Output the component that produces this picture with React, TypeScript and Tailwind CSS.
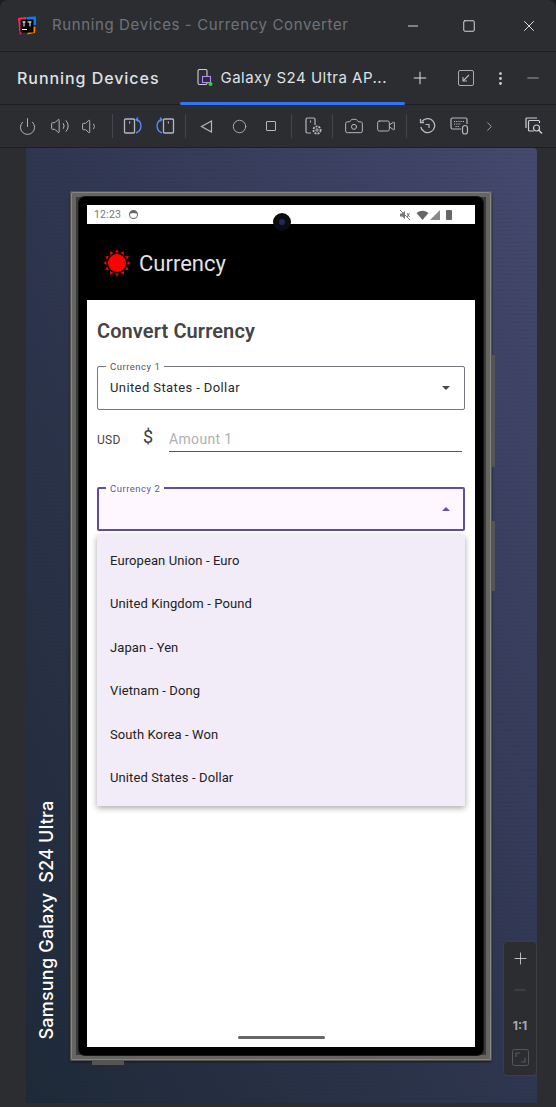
import { Camera, ChevronRight, Circle, Ellipsis, Minus, Plus, Power, Square, Video, Volume1, Volume2, X } from 'lucide-react';
import type { ReactNode } from 'react';

const currencies = [
  'European Union - Euro',
  'United Kingdom - Pound',
  'Japan - Yen',
  'Vietnam - Dong',
  'South Korea - Won',
  'United States - Dollar',
];

function Tool({ children, className = '' }: { children: ReactNode; className?: string }) {
  return <div className={`flex h-[32px] w-[32px] shrink-0 items-center justify-center ${className}`}>{children}</div>;
}

function Sep({ className = '' }: { className?: string }) {
  return <div className={`h-[24px] w-px shrink-0 bg-[#43454a] ${className}`} />;
}

function Logo() {
  return (
    <svg width="20" height="20" viewBox="0 0 20 20" className="shrink-0">
      <path d="M1 2 L9 1 L9 12 L3 19 L2 12 Z" fill="#fe2857" />
      <path d="M9 1 L19 0.5 L19 9 L12 9 Z" fill="#087cfa" />
      <path d="M15 10 L18.5 11 L18 17 L10 18.5 Z" fill="#ff8100" />
      <rect x="3.5" y="3.5" width="13" height="13" fill="#000" />
      <rect x="5" y="13" width="5" height="1" fill="#fff" />
      <rect x="5.5" y="5.5" width="3" height="1" fill="#fff" />
      <rect x="6.5" y="5.5" width="1" height="5" fill="#fff" />
      <rect x="10.5" y="5.5" width="4" height="1" fill="#fff" />
      <rect x="12.5" y="5.5" width="1" height="5" fill="#fff" />
    </svg>
  );
}

function SunIcon() {
  const rays = [0, 30, 60, 90, 120, 150, 180, 210, 240, 270, 300, 330];
  return (
    <svg width="28" height="28" viewBox="0 0 28 28" className="shrink-0">
      {rays.map((deg) => (
        <path key={deg} d="M14 0.5 L16 3.5 L12 3.5 Z" fill="#ff0000" transform={`rotate(${deg} 14 14)`} />
      ))}
      <circle cx="14" cy="14" r="9" fill="#ff0000" />
    </svg>
  );
}

function RotateIcon({ flip }: { flip?: boolean }) {
  return (
    <svg width="20" height="18" viewBox="0 0 20 18" fill="none" className={flip ? '-scale-x-100' : ''}>
      <rect x="1.5" y="2" width="10" height="14" rx="1" stroke="#b4b8bf" strokeWidth="1.3" />
      <rect x="6" y="4.5" width="1.2" height="2" fill="#b4b8bf" />
      <path d="M13.5 2.5 C19.5 4.5 19.5 13.5 13 16" stroke="#548af7" strokeWidth="1.4" />
      <path d="M15 0.5 L13 2.6 L15.5 4.5" stroke="#548af7" strokeWidth="1.2" />
    </svg>
  );
}

function DeviceTabIcon() {
  return (
    <svg width="16" height="18" viewBox="0 0 16 18" fill="none" className="shrink-0">
      <rect x="1" y="0.5" width="9" height="15" rx="1.5" stroke="#ced0d6" strokeWidth="1.1" />
      <rect x="5.5" y="7.5" width="8" height="6" fill="#2b2d30" stroke="#b189f5" strokeWidth="1.1" />
      <circle cx="13.5" cy="15" r="2" fill="#22dd22" />
    </svg>
  );
}

function PhoneGear() {
  return (
    <svg width="18" height="18" viewBox="0 0 18 18" fill="none">
      <path d="M6 16 H2.5 A1.5 1.5 0 0 1 1 14.5 V2.5 A1.5 1.5 0 0 1 2.5 1 H8.5 A1.5 1.5 0 0 1 10 2.5 V8" stroke="#b4b8bf" strokeWidth="1.2" />
      <rect x="5" y="3.5" width="1" height="2" fill="#b4b8bf" />
      <circle cx="12" cy="13" r="3.6" stroke="#b4b8bf" strokeWidth="1.8" strokeDasharray="2 1" />
      <circle cx="12" cy="13" r="1.2" stroke="#b4b8bf" />
    </svg>
  );
}

function ResetIcon() {
  return (
    <svg width="17" height="17" viewBox="0 0 17 17" fill="none">
      <path d="M3 3.5 A7 7 0 1 1 1.8 9" stroke="#b4b8bf" strokeWidth="1.3" />
      <path d="M1.5 1 V4.5 H5" stroke="#b4b8bf" strokeWidth="1.3" />
      <path d="M6.5 6.5 H10 V10" stroke="#b4b8bf" strokeWidth="1.2" />
    </svg>
  );
}

function KeyboardIcon() {
  return (
    <svg width="20" height="18" viewBox="0 0 20 18" fill="none">
      <path d="M11 12 H2.5 A1.5 1.5 0 0 1 1 10.5 V2.5 A1.5 1.5 0 0 1 2.5 1 H15.5 A1.5 1.5 0 0 1 17 2.5 V7" stroke="#b4b8bf" strokeWidth="1.2" />
      <path d="M4 4.5 H14 M4 7 H11 M5.5 9.5 H10" stroke="#b4b8bf" strokeWidth="1.2" strokeDasharray="1.2 1" />
      <rect x="12.5" y="8.5" width="5" height="8.5" rx="2.5" stroke="#b4b8bf" strokeWidth="1.2" />
    </svg>
  );
}

function ScreenSearchIcon() {
  return (
    <svg width="18" height="18" viewBox="0 0 18 18" fill="none">
      <path d="M1 11 V2 A1 1 0 0 1 2 1 H12" stroke="#ced0d6" strokeWidth="1.2" />
      <path d="M9 14 H4.5 A1 1 0 0 1 3.5 13 V4.5 A1 1 0 0 1 4.5 3.5 H13.5 A1 1 0 0 1 14.5 4.5 V6" stroke="#ced0d6" strokeWidth="1.2" />
      <circle cx="11.5" cy="11" r="3" stroke="#ced0d6" strokeWidth="1.2" />
      <path d="M13.8 13.3 L17 16.5" stroke="#ced0d6" strokeWidth="1.4" />
    </svg>
  );
}

function StatusIcons() {
  return (
    <div className="flex items-center">
      <svg width="12" height="12" viewBox="0 0 12 12" fill="none">
        <path d="M1 4.5 H3 L6 2 V10 L3 7.5 H1 Z" fill="#777" />
        <path d="M8 4 L10.5 8 M10.5 4 L8 8 M1 1 L11 11" stroke="#777" strokeWidth="1" />
      </svg>
      <svg width="13" height="10" viewBox="0 0 13 10" className="ml-[5px]">
        <path d="M0.5 3 Q6.5 -1.5 12.5 3 L6.5 10 Z" fill="#666" />
      </svg>
      <svg width="10" height="10" viewBox="0 0 10 10" className="ml-px">
        <path d="M0 10 L10 0 V10 Z" fill="#888" />
      </svg>
      <div className="ml-[6px] h-[10px] w-[6px] rounded-[1px] bg-[#666]" />
    </div>
  );
}

function SelectField({ label, focused, value }: { label: string; focused?: boolean; value?: string }) {
  return (
    <div
      className={`relative flex h-[44px] items-center rounded-[2px] ${
        focused ? 'border-2 border-[#5f4da5] bg-[#fef7ff] pl-[11px] pr-[13px]' : 'border border-[#79747e] pl-[12px] pr-[14px]'
      }`}
    >
      <span
        className={`absolute top-[-6px] bg-white px-[4px] text-[9.5px] leading-[11px] tracking-[0.5px] ${
          focused ? 'left-[7px] text-[#6750a4]' : 'left-[8px] text-[#55525a]'
        }`}
      >
        {label}
      </span>
      <span className="flex-1 text-[13px] tracking-[0.4px] text-[#2a2a2e]">{value}</span>
      <span
        className={`h-0 w-0 border-x-[4.5px] border-x-transparent ${
          focused ? 'border-b-[4px] border-b-[#6750a4]' : 'border-t-[4px] border-t-[#49454f]'
        }`}
      />
    </div>
  );
}

function Screen() {
  return (
    <div className="relative flex h-[842px] w-[388px] flex-col bg-white font-['Roboto',sans-serif]">
      <div className="flex h-[19px] items-center justify-between pl-[7px] pr-[23px]">
        <div className="flex items-center gap-[8px]">
          <span className="text-[10.5px] tracking-[0.2px] text-[#777]">12:23</span>
          <div className="h-[9px] w-[9px] rounded-full border-[1.5px] border-[#666] border-t-[3px]" />
        </div>
        <StatusIcons />
      </div>
      <div className="flex h-[76px] items-center bg-black pl-[16px] pt-[2px]">
        <SunIcon />
        <span className="ml-[8px] pt-px text-[22px] text-[#e2e2e2]">Currency</span>
      </div>
      <div className="flex flex-1 flex-col px-[10px]">
        <h1 className="mt-[18px] text-[20px] font-semibold leading-[26px] tracking-[0.1px] text-[#444446]">Convert Currency</h1>
        <div className="mt-[22px]">
          <SelectField label="Currency 1" value="United States - Dollar" />
        </div>
        <div className="mt-[11px] flex h-[31px] items-center pr-[3px]">
          <span className="w-[46px] pt-[7px] text-[12px] tracking-[0.3px] text-[#444]">USD</span>
          <span className="w-[26px] text-[18px] leading-none text-[#3d3d3d]">$</span>
          <div className="flex h-full flex-1 items-center border-b border-[#555] pt-[7px] text-[14px] tracking-[0.35px] text-[#b0b0b0]">
            Amount 1
          </div>
        </div>
        <div className="mt-[35px]">
          <SelectField label="Currency 2" focused />
        </div>
        <div className="relative">
          <div className="absolute left-0 top-[4px] z-10 flex w-[368px] flex-col bg-[#f1ecf7] pb-[7px] pt-[4px] shadow-[0_2px_6px_rgba(0,0,0,0.35)]">
            {currencies.map((c) => (
              <div key={c} className="flex h-[43.4px] items-center pl-[13px] text-[13px] tracking-[0.1px] text-[#222226]">
                {c}
              </div>
            ))}
          </div>
        </div>
      </div>
      <div className="absolute bottom-[8px] left-[151px] h-[3px] w-[87px] rounded-full bg-[#666]" />
      <div className="absolute left-[186px] top-[8px] h-[18px] w-[18px] rounded-full bg-[#0b0b12]">
        <div className="ml-[6px] mt-[6px] h-[6px] w-[6px] rounded-full bg-[#1e2a55]" />
      </div>
    </div>
  );
}

function Phone() {
  return (
    <div className="relative ml-[44px] mt-[43px] w-[422px] rounded-[3px] bg-[#3a3a38] px-[9px] pb-[6px] pt-[6px] shadow-[inset_0_0_0_1px_#55554f,inset_0_0_0_2px_#86867f,inset_0_0_0_6px_#656561,0_1px_2px_#1a1a1a]">
      <div className="rounded-[6px] bg-black p-[8px] shadow-[0_0_0_1px_#161616]">
        <Screen />
      </div>
      <div className="absolute right-[-3px] top-[164px] h-[112px] w-[3px] bg-[#555]" />
      <div className="absolute right-[-3px] top-[330px] h-[70px] w-[3px] bg-[#555]" />
      <div className="absolute bottom-[-4px] left-[22px] h-[4px] w-[32px] bg-[#555]" />
    </div>
  );
}

export default function App() {
  return (
    <div className="flex h-[1107px] w-[556px] flex-col overflow-hidden bg-[#1c1d1f]">
      <div className="flex h-full flex-col rounded-t-[8px] bg-[#2b2d30] font-['Inter',sans-serif] text-[#dfe1e5]">
        <div className="flex h-[52px] shrink-0 items-center border-b border-[#1e1f22] pl-[17px] pr-[18px]">
          <Logo />
          <span className="ml-[15px] flex-1 text-[15px] tracking-[0.62px] text-[#6f737a]">Running Devices - Currency Converter</span>
          <Minus size={16} strokeWidth={1.4} className="mr-[41px] text-[#dfe1e5]" />
          <Square size={14} strokeWidth={1.6} className="mr-[44px] text-[#dfe1e5]" />
          <X size={18} strokeWidth={1.3} className="text-[#dfe1e5]" />
        </div>

        <div className="flex h-[53px] shrink-0 items-center border-b border-[#1e1f22] pl-[17px]">
          <span className="text-[16px] font-medium tracking-[0.95px] text-[#dfe1e5]">Running Devices</span>
          <div className="relative ml-[21px] flex h-full w-[225px] items-center pl-[17px]">
            <DeviceTabIcon />
            <span className="ml-[7px] text-[15px] tracking-[0.5px] text-[#dfe1e5]">Galaxy S24 Ultra AP...</span>
            <div className="absolute bottom-[-1px] left-0 h-[3px] w-full rounded-full bg-[#3574f0]" />
          </div>
          <Plus size={20} strokeWidth={1.2} className="ml-[5px] text-[#dfe1e5]" />
          <div className="ml-[28px] flex h-[16px] w-[16px] items-center justify-center rounded-[2px] border border-[#a9abb1]">
            <svg width="8" height="8" viewBox="0 0 8 8" fill="none">
              <path d="M7 1 L1.5 6.5 M1 3 V7 H5" stroke="#b4b8bf" strokeWidth="1.1" />
            </svg>
          </div>
          <Ellipsis size={17} className="ml-[18px] rotate-90 text-[#ced0d6]" />
          <Minus size={18} strokeWidth={1.2} className="ml-[15px] text-[#a9abb1]" />
        </div>

        <div className="flex h-[43px] shrink-0 items-center border-b border-[#1e1f22] pl-[11px]">
          <Tool><Power size={19} strokeWidth={1.2} className="text-[#b4b8bf]" /></Tool>
          <Tool className="ml-px"><Volume2 size={20} strokeWidth={1.2} className="text-[#b4b8bf]" /></Tool>
          <Tool className="-ml-[2px]"><Volume1 size={19} strokeWidth={1.2} className="text-[#b4b8bf]" /></Tool>
          <Sep className="ml-[6px]" />
          <Tool className="ml-[4px]"><RotateIcon /></Tool>
          <Tool><RotateIcon flip /></Tool>
          <Sep className="ml-[4px]" />
          <Tool className="ml-[4px]"><svg width="13" height="13" viewBox="0 0 13 13" fill="none"><path d="M11.5 1 L1.5 6.5 L11.5 12 Z" stroke="#b4b8bf" strokeWidth="1.2" /></svg></Tool>
          <Tool className="ml-px"><Circle size={15} strokeWidth={1.4} className="text-[#b4b8bf]" /></Tool>
          <Tool><div className="h-[10px] w-[10px] rounded-[1px] border-[1.5px] border-[#b4b8bf]" /></Tool>
          <Sep className="ml-[4px]" />
          <Tool className="ml-[6px]"><PhoneGear /></Tool>
          <Sep className="ml-[2px]" />
          <Tool className="ml-[5px]"><Camera size={20} strokeWidth={1.2} className="text-[#b4b8bf]" /></Tool>
          <Tool><Video size={20} strokeWidth={1.2} className="text-[#b4b8bf]" /></Tool>
          <Sep className="ml-[4px]" />
          <Tool className="ml-[4px]"><ResetIcon /></Tool>
          <Tool className="ml-px"><KeyboardIcon /></Tool>
          <Tool className="-ml-[3px]"><ChevronRight size={15} strokeWidth={1.3} className="text-[#b4b8bf]" /></Tool>
          <Tool className="ml-[13px]"><ScreenSearchIcon /></Tool>
        </div>

        <div className="relative ml-[26px] mr-[19px] h-[955px] shrink-0 rounded-tr-[4px] bg-[repeating-linear-gradient(0deg,rgba(0,0,0,0.04)_0px,rgba(0,0,0,0.04)_1px,transparent_1px,transparent_4px),linear-gradient(to_bottom_left,#45496f,#2f3650,#1e2a38)]">
          <Phone />
          <span className="absolute left-[-109px] top-[762px] w-[260px] -rotate-90 text-center text-[18px] font-medium leading-[20px] tracking-[0.2px] text-white">
            Samsung Galaxy&nbsp; S24 Ultra
          </span>
          <div className="absolute left-[477px] top-[793px] flex h-[135px] w-[34px] flex-col items-center rounded-[4px] border border-[#3c3e42] bg-[#2b2d30] pt-[7px]">
            <Plus size={19} strokeWidth={1} className="text-[#dfe1e5]" />
            <Minus size={18} strokeWidth={1} className="mt-[13px] text-[#5a5d63]" />
            <span className="mt-[20px] text-[12px] font-bold leading-[14px] text-[#a9abb1]">1:1</span>
            <svg width="17" height="17" viewBox="0 0 17 17" fill="none" className="mt-[16px]">
              <rect x="0.5" y="0.5" width="16" height="16" rx="2" stroke="#55585e" />
              <path d="M4 8 V4 H8 M9 13 H13 V9" stroke="#55585e" strokeWidth="1.2" />
            </svg>
          </div>
        </div>
      </div>
    </div>
  );
}
